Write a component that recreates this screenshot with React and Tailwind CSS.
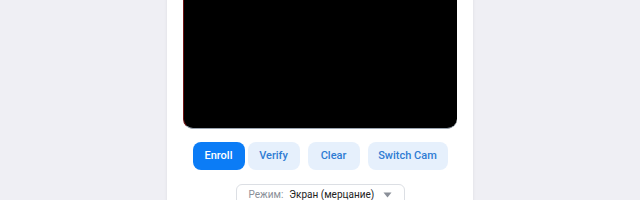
import React from 'react';

const BUTTONS = [
  { label: 'Enroll', primary: true, w: 'w-[52px]', extra: '' },
  { label: 'Verify', primary: false, w: 'w-[52px]', extra: '-ml-[5px]' },
  { label: 'Clear', primary: false, w: 'w-[52px]', extra: '' },
  { label: 'Switch Cam', primary: false, w: 'w-[80px]', extra: '' },
];

export default function App() {
  return (
    <div className="w-[640px] h-[200px] overflow-hidden bg-[#efeff4] flex items-start justify-center" style={{ fontFamily: 'Roboto, "Noto Sans", sans-serif' }}>
      <div className="w-[306px] shrink-0 -mt-[100px] bg-white shadow-[0_0_3px_rgba(0,0,0,0.08)] px-4 pb-6 flex flex-col items-center">
        {/* camera preview */}
        <div className="w-[274px] h-[229px] shrink-0 bg-black rounded-[10px] border-l-[1.5px] border-[#6e1414] border-b border-b-[#9aa4b0]" />

        <div className="flex gap-2 mt-[13px]">
          {BUTTONS.map(b => (
            <button
              key={b.label}
              className={`${b.w} ${b.extra} h-[28px] rounded-[8px] text-[11px] font-medium whitespace-nowrap flex items-center justify-center ${b.primary ? 'bg-[#0b7cf6] text-white' : 'bg-[#e6f0fc] text-[#2f7cd3]'}`}
            >
              {b.label}
            </button>
          ))}
        </div>

        <div className="mt-[14px] w-[169px] h-[22px] shrink-0 border border-[#dcdfe4] rounded-[6px] bg-white flex items-center pl-[12px] pr-[12px] text-[10px] leading-none whitespace-nowrap">
          <span className="text-[#8a8f98]">Режим:</span>
          <span className="text-[#222] ml-[6px]">Экран (мерцание)</span>
          <svg className="ml-auto shrink-0" width="9" height="6" viewBox="0 0 9 6">
            <path d="M0.5 0.5 L8.5 0.5 L4.5 5.5 Z" fill="#8a8f98" />
          </svg>
        </div>
      </div>
    </div>
  );
}
